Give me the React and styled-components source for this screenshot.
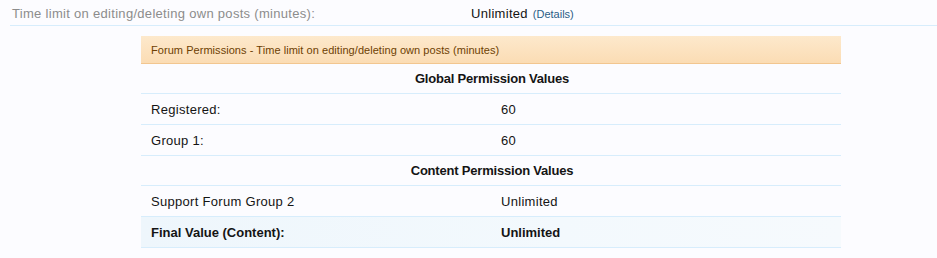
import React from "react";
import styled, { createGlobalStyle } from "styled-components";

const GlobalStyle = createGlobalStyle`
  html, body {
    margin: 0;
    padding: 0;
    background: #fcfcff;
  }
  body {
    font-family: "Liberation Sans", Arial, sans-serif;
    font-size: 13px;
    color: #141414;
  }
`;

const Page = styled.div`
  padding: 2px 0 0 10px;
  width: 927px;
`;

const TopRow = styled.div`
  display: grid;
  grid-template-columns: 461px 1fr;
  align-items: center;
  height: 23px;
  border-bottom: 1px solid #d7edfc;
  letter-spacing: 0.3px;
`;

const TopLabel = styled.div`
  padding-left: 2px;
  color: #8c8c8c;
`;

const TopValue = styled.div`
  color: #141414;
`;

const DetailsLink = styled.a`
  font-size: 11px;
  letter-spacing: 0;
  color: #2b5d86;
  text-decoration: none;
  margin-left: 1px;
`;

const Panel = styled.div`
  width: 700px;
  margin: 10px 0 0 131px;
`;

const PanelHeader = styled.div`
  height: 27px;
  display: flex;
  align-items: center;
  padding-left: 10px;
  font-size: 11px;
  letter-spacing: 0.05px;
  color: #6d3f03;
  background: linear-gradient(to bottom, #fde9cc 0%, #fbdcb4 100%);
  border-bottom: 1px solid #f2c690;
`;

const SectionTitle = styled.div`
  height: 29px;
  display: flex;
  align-items: center;
  justify-content: center;
  font-weight: bold;
  letter-spacing: -0.2px;
  padding-left: 2px;
  border-bottom: 1px solid #d7edfc;
`;

const Row = styled.div`
  display: grid;
  grid-template-columns: 360px 1fr;
  align-items: center;
  height: 30px;
  border-bottom: 1px solid #d7edfc;
  letter-spacing: ${(p) => (p.$final ? "0" : "0.3px")};
  font-weight: ${(p) => (p.$final ? "bold" : "normal")};
  background: ${(p) =>
    p.$final
      ? "linear-gradient(to right, #eef6fc 0%, #f3f9fd 60%, #f6fafd 100%)"
      : "transparent"};
`;

const Label = styled.div`
  padding-left: 10px;
`;

const Value = styled.div``;

const globalValues = [
  { label: "Registered:", value: "60" },
  { label: "Group 1:", value: "60" },
];

const contentValues = [{ label: "Support Forum Group 2", value: "Unlimited" }];

export default function App() {
  return (
    <>
      <GlobalStyle />
      <Page>
        <TopRow>
          <TopLabel>Time limit on editing/deleting own posts (minutes):</TopLabel>
          <TopValue>
            Unlimited <DetailsLink href="#">(Details)</DetailsLink>
          </TopValue>
        </TopRow>
        <Panel>
          <PanelHeader>
            Forum Permissions - Time limit on editing/deleting own posts (minutes)
          </PanelHeader>
          <SectionTitle>Global Permission Values</SectionTitle>
          {globalValues.map((r) => (
            <Row key={r.label}>
              <Label>{r.label}</Label>
              <Value>{r.value}</Value>
            </Row>
          ))}
          <SectionTitle>Content Permission Values</SectionTitle>
          {contentValues.map((r) => (
            <Row key={r.label}>
              <Label>{r.label}</Label>
              <Value>{r.value}</Value>
            </Row>
          ))}
          <Row $final>
            <Label>Final Value (Content):</Label>
            <Value>Unlimited</Value>
          </Row>
        </Panel>
      </Page>
    </>
  );
}
